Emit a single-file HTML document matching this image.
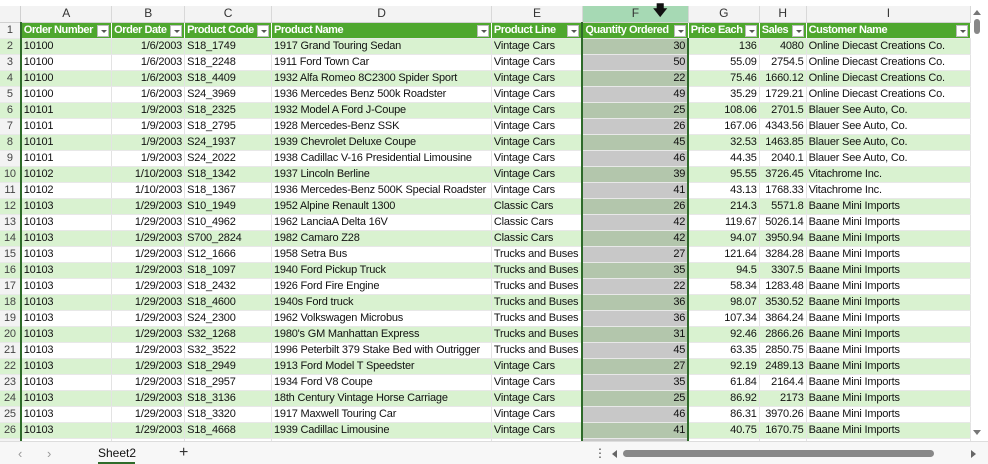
<!DOCTYPE html>
<html><head><meta charset="utf-8"><style>
*{margin:0;padding:0;box-sizing:border-box}
body{width:988px;height:464px;overflow:hidden;background:#fff;font-family:"Liberation Sans",sans-serif;font-size:11px;color:#111;position:relative}
table{position:absolute;left:0;top:6px;border-collapse:collapse;table-layout:fixed}
td{height:16px;padding:0 2px;white-space:nowrap;overflow:hidden;border-right:1px solid #e3e3e3;border-bottom:1px solid #e8e8e8;line-height:15px;letter-spacing:-0.2px}
tr.ch td{height:16px;background:#f3f3f3;text-align:center;color:#333;font-size:12px;border-bottom:1px solid #d0d0d0;border-right:1px solid #d8d8d8}
td.rn{background:#f3f3f3;color:#444;text-align:center;font-size:11px;border-right:2px solid #2f6b2a;padding:0}
tr.h td{background:#4ea72e;color:#fff;font-weight:bold;position:relative;border-right:1px solid #fff;letter-spacing:-0.45px;padding-right:15px}
tr.h td.rn{background:#f3f3f3;color:#444;font-weight:normal;border-right:2px solid #2f6b2a;padding:0;letter-spacing:0}
.dd{position:absolute;right:2px;top:2px;width:12px;height:12px;background:#fff;border:1px solid #bbb}
.dd:after{content:"";position:absolute;left:3px;top:4px;border-left:3px solid transparent;border-right:3px solid transparent;border-top:3px solid #555}
tr.g td{background:#d9f2d0}
td.r{text-align:right}
td.f{background:#c8c8c8 !important;border-left:2px solid #2e6b2a;border-right:2px solid #2e6b2a;text-align:right}
tr.g td.f{background:#b3c6ac !important}
tr.h td.f{background:#4ea72e !important;text-align:left}
tr.ch td.fc{background:#a6d9b4;color:#333}
.tabs{position:absolute;left:0;top:441px;width:988px;height:23px;background:#f7f7f7;border-top:1px solid #ddd}
</style></head><body>
<table>
<colgroup><col style="width:21px"><col style="width:91px"><col style="width:73px"><col style="width:87px"><col style="width:220px"><col style="width:91px"><col style="width:106px"><col style="width:71px"><col style="width:47px"><col style="width:165px"><col style="width:16px"></colgroup>
<tr class="ch"><td class="rn" style="border-right:1px solid #d0d0d0"></td><td>A</td><td>B</td><td>C</td><td>D</td><td>E</td><td class="fc">F</td><td>G</td><td>H</td><td>I</td><td style="background:#fff;border:none"></td></tr>
<tr class="h"><td class="rn">1</td><td>Order Number<span class="dd"></span></td><td>Order Date<span class="dd"></span></td><td>Product Code<span class="dd"></span></td><td>Product Name<span class="dd"></span></td><td>Product Line<span class="dd"></span></td><td class="f">Quantity Ordered<span class="dd"></span></td><td>Price Each<span class="dd"></span></td><td>Sales<span class="dd"></span></td><td>Customer Name<span class="dd"></span></td><td style="background:#fff;border:none"></td></tr>
<tr class="g"><td class="rn">2</td><td>10100</td><td class="r">1/6/2003</td><td>S18_1749</td><td>1917 Grand Touring Sedan</td><td>Vintage Cars</td><td class="f">30</td><td class="r">136</td><td class="r">4080</td><td>Online Diecast Creations Co.</td><td style="background:#fff;border:none"></td></tr>
<tr><td class="rn">3</td><td>10100</td><td class="r">1/6/2003</td><td>S18_2248</td><td>1911 Ford Town Car</td><td>Vintage Cars</td><td class="f">50</td><td class="r">55.09</td><td class="r">2754.5</td><td>Online Diecast Creations Co.</td><td style="border:none"></td></tr>
<tr class="g"><td class="rn">4</td><td>10100</td><td class="r">1/6/2003</td><td>S18_4409</td><td>1932 Alfa Romeo 8C2300 Spider Sport</td><td>Vintage Cars</td><td class="f">22</td><td class="r">75.46</td><td class="r">1660.12</td><td>Online Diecast Creations Co.</td><td style="background:#fff;border:none"></td></tr>
<tr><td class="rn">5</td><td>10100</td><td class="r">1/6/2003</td><td>S24_3969</td><td>1936 Mercedes Benz 500k Roadster</td><td>Vintage Cars</td><td class="f">49</td><td class="r">35.29</td><td class="r">1729.21</td><td>Online Diecast Creations Co.</td><td style="border:none"></td></tr>
<tr class="g"><td class="rn">6</td><td>10101</td><td class="r">1/9/2003</td><td>S18_2325</td><td>1932 Model A Ford J-Coupe</td><td>Vintage Cars</td><td class="f">25</td><td class="r">108.06</td><td class="r">2701.5</td><td>Blauer See Auto, Co.</td><td style="background:#fff;border:none"></td></tr>
<tr><td class="rn">7</td><td>10101</td><td class="r">1/9/2003</td><td>S18_2795</td><td>1928 Mercedes-Benz SSK</td><td>Vintage Cars</td><td class="f">26</td><td class="r">167.06</td><td class="r">4343.56</td><td>Blauer See Auto, Co.</td><td style="border:none"></td></tr>
<tr class="g"><td class="rn">8</td><td>10101</td><td class="r">1/9/2003</td><td>S24_1937</td><td>1939 Chevrolet Deluxe Coupe</td><td>Vintage Cars</td><td class="f">45</td><td class="r">32.53</td><td class="r">1463.85</td><td>Blauer See Auto, Co.</td><td style="background:#fff;border:none"></td></tr>
<tr><td class="rn">9</td><td>10101</td><td class="r">1/9/2003</td><td>S24_2022</td><td>1938 Cadillac V-16 Presidential Limousine</td><td>Vintage Cars</td><td class="f">46</td><td class="r">44.35</td><td class="r">2040.1</td><td>Blauer See Auto, Co.</td><td style="border:none"></td></tr>
<tr class="g"><td class="rn">10</td><td>10102</td><td class="r">1/10/2003</td><td>S18_1342</td><td>1937 Lincoln Berline</td><td>Vintage Cars</td><td class="f">39</td><td class="r">95.55</td><td class="r">3726.45</td><td>Vitachrome Inc.</td><td style="background:#fff;border:none"></td></tr>
<tr><td class="rn">11</td><td>10102</td><td class="r">1/10/2003</td><td>S18_1367</td><td>1936 Mercedes-Benz 500K Special Roadster</td><td>Vintage Cars</td><td class="f">41</td><td class="r">43.13</td><td class="r">1768.33</td><td>Vitachrome Inc.</td><td style="border:none"></td></tr>
<tr class="g"><td class="rn">12</td><td>10103</td><td class="r">1/29/2003</td><td>S10_1949</td><td>1952 Alpine Renault 1300</td><td>Classic Cars</td><td class="f">26</td><td class="r">214.3</td><td class="r">5571.8</td><td>Baane Mini Imports</td><td style="background:#fff;border:none"></td></tr>
<tr><td class="rn">13</td><td>10103</td><td class="r">1/29/2003</td><td>S10_4962</td><td>1962 LanciaA Delta 16V</td><td>Classic Cars</td><td class="f">42</td><td class="r">119.67</td><td class="r">5026.14</td><td>Baane Mini Imports</td><td style="border:none"></td></tr>
<tr class="g"><td class="rn">14</td><td>10103</td><td class="r">1/29/2003</td><td>S700_2824</td><td>1982 Camaro Z28</td><td>Classic Cars</td><td class="f">42</td><td class="r">94.07</td><td class="r">3950.94</td><td>Baane Mini Imports</td><td style="background:#fff;border:none"></td></tr>
<tr><td class="rn">15</td><td>10103</td><td class="r">1/29/2003</td><td>S12_1666</td><td>1958 Setra Bus</td><td>Trucks and Buses</td><td class="f">27</td><td class="r">121.64</td><td class="r">3284.28</td><td>Baane Mini Imports</td><td style="border:none"></td></tr>
<tr class="g"><td class="rn">16</td><td>10103</td><td class="r">1/29/2003</td><td>S18_1097</td><td>1940 Ford Pickup Truck</td><td>Trucks and Buses</td><td class="f">35</td><td class="r">94.5</td><td class="r">3307.5</td><td>Baane Mini Imports</td><td style="background:#fff;border:none"></td></tr>
<tr><td class="rn">17</td><td>10103</td><td class="r">1/29/2003</td><td>S18_2432</td><td>1926 Ford Fire Engine</td><td>Trucks and Buses</td><td class="f">22</td><td class="r">58.34</td><td class="r">1283.48</td><td>Baane Mini Imports</td><td style="border:none"></td></tr>
<tr class="g"><td class="rn">18</td><td>10103</td><td class="r">1/29/2003</td><td>S18_4600</td><td>1940s Ford truck</td><td>Trucks and Buses</td><td class="f">36</td><td class="r">98.07</td><td class="r">3530.52</td><td>Baane Mini Imports</td><td style="background:#fff;border:none"></td></tr>
<tr><td class="rn">19</td><td>10103</td><td class="r">1/29/2003</td><td>S24_2300</td><td>1962 Volkswagen Microbus</td><td>Trucks and Buses</td><td class="f">36</td><td class="r">107.34</td><td class="r">3864.24</td><td>Baane Mini Imports</td><td style="border:none"></td></tr>
<tr class="g"><td class="rn">20</td><td>10103</td><td class="r">1/29/2003</td><td>S32_1268</td><td>1980's GM Manhattan Express</td><td>Trucks and Buses</td><td class="f">31</td><td class="r">92.46</td><td class="r">2866.26</td><td>Baane Mini Imports</td><td style="background:#fff;border:none"></td></tr>
<tr><td class="rn">21</td><td>10103</td><td class="r">1/29/2003</td><td>S32_3522</td><td>1996 Peterbilt 379 Stake Bed with Outrigger</td><td>Trucks and Buses</td><td class="f">45</td><td class="r">63.35</td><td class="r">2850.75</td><td>Baane Mini Imports</td><td style="border:none"></td></tr>
<tr class="g"><td class="rn">22</td><td>10103</td><td class="r">1/29/2003</td><td>S18_2949</td><td>1913 Ford Model T Speedster</td><td>Vintage Cars</td><td class="f">27</td><td class="r">92.19</td><td class="r">2489.13</td><td>Baane Mini Imports</td><td style="background:#fff;border:none"></td></tr>
<tr><td class="rn">23</td><td>10103</td><td class="r">1/29/2003</td><td>S18_2957</td><td>1934 Ford V8 Coupe</td><td>Vintage Cars</td><td class="f">35</td><td class="r">61.84</td><td class="r">2164.4</td><td>Baane Mini Imports</td><td style="border:none"></td></tr>
<tr class="g"><td class="rn">24</td><td>10103</td><td class="r">1/29/2003</td><td>S18_3136</td><td>18th Century Vintage Horse Carriage</td><td>Vintage Cars</td><td class="f">25</td><td class="r">86.92</td><td class="r">2173</td><td>Baane Mini Imports</td><td style="background:#fff;border:none"></td></tr>
<tr><td class="rn">25</td><td>10103</td><td class="r">1/29/2003</td><td>S18_3320</td><td>1917 Maxwell Touring Car</td><td>Vintage Cars</td><td class="f">46</td><td class="r">86.31</td><td class="r">3970.26</td><td>Baane Mini Imports</td><td style="border:none"></td></tr>
<tr class="g"><td class="rn">26</td><td>10103</td><td class="r">1/29/2003</td><td>S18_4668</td><td>1939 Cadillac Limousine</td><td>Vintage Cars</td><td class="f">41</td><td class="r">40.75</td><td class="r">1670.75</td><td>Baane Mini Imports</td><td style="background:#fff;border:none"></td></tr>
<tr><td class="rn"></td><td></td><td></td><td></td><td></td><td></td><td class="f"></td><td></td><td></td><td></td><td style="border:none"></td></tr>
</table>
<div style="position:absolute;left:653px;top:0;font-size:14px;font-weight:bold;color:#111">🡇</div>
<div style="position:absolute;left:973px;top:10px;width:0;height:0;border-left:4px solid transparent;border-right:4px solid transparent;border-bottom:5px solid #777"></div>
<div style="position:absolute;left:974px;top:19px;width:6px;height:15px;background:#888;border-radius:3px"></div>
<div style="position:absolute;left:973px;top:430px;width:0;height:0;border-left:4px solid transparent;border-right:4px solid transparent;border-top:5px solid #777"></div>
<div class="tabs">
<span style="position:absolute;left:18px;top:4px;color:#999;font-size:13px">‹</span>
<span style="position:absolute;left:47px;top:4px;color:#999;font-size:13px">›</span>
<span style="position:absolute;left:98px;top:4px;font-size:12px;color:#111">Sheet2</span>
<div style="position:absolute;left:98px;top:20px;width:37px;height:2px;background:#2e6b2a"></div>
<span style="position:absolute;left:179px;top:2px;font-size:16px;color:#333">+</span>
<span style="position:absolute;left:594px;top:4px;font-size:12px;color:#444">⋮</span>
<div style="position:absolute;left:612px;top:8px;width:0;height:0;border-top:4px solid transparent;border-bottom:4px solid transparent;border-right:5px solid #666"></div>
<div style="position:absolute;left:623px;top:8px;width:311px;height:7px;background:#888;border-radius:4px"></div>
<div style="position:absolute;left:971px;top:8px;width:0;height:0;border-top:4px solid transparent;border-bottom:4px solid transparent;border-left:5px solid #666"></div>
</div>
</body></html>
